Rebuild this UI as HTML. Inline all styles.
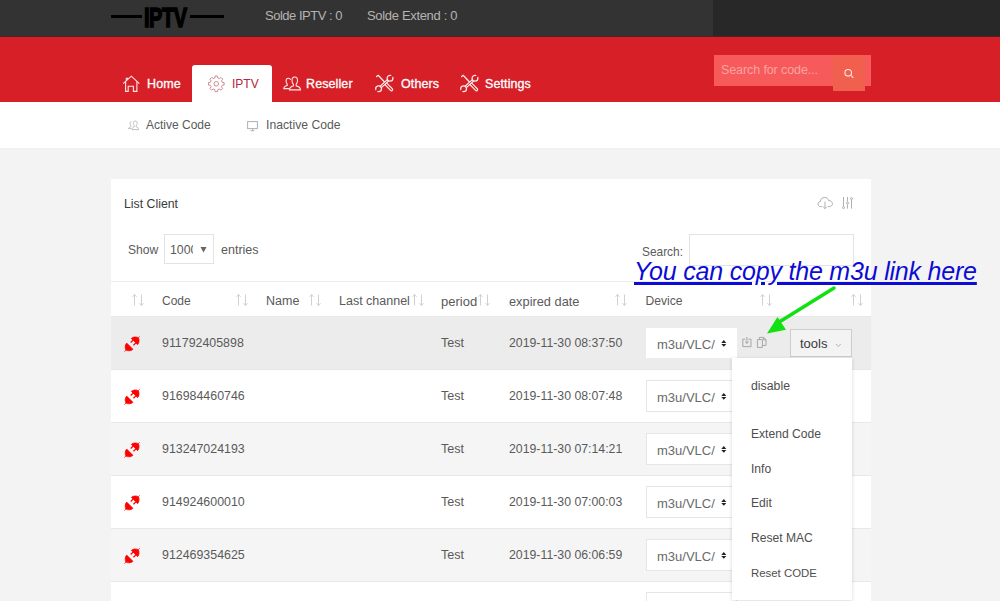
<!DOCTYPE html>
<html><head><meta charset="utf-8">
<style>
*{box-sizing:border-box;margin:0;padding:0}
html,body{width:1000px;height:601px;overflow:hidden;background:#f3f3f3;font-family:"Liberation Sans",sans-serif}
.a{position:absolute;white-space:nowrap;line-height:15px}
svg{position:absolute;overflow:visible}
</style></head><body>
<div class="a" style="left:0;top:0;width:713px;height:37px;background:#333"></div>
<div class="a" style="left:713px;top:0;width:287px;height:37px;background:#282828"></div>
<div class="a" style="left:111px;top:15px;width:31px;height:2.5px;background:#000"></div>
<div class="a" style="left:190px;top:15px;width:34px;height:2.5px;background:#000"></div>
<div class="a" style="left:144px;top:1.5px;font-size:28.5px;line-height:30px;font-weight:bold;color:#000;-webkit-text-stroke:1.6px #000;letter-spacing:-0.6px;transform:scaleX(0.70);transform-origin:0 0">IPTV</div>
<div class="a" style="left:265px;top:7.5px;font-size:13px;color:#b4b4b4;letter-spacing:-0.48px">Solde IPTV : 0</div>

<div class="a" style="left:367px;top:7.5px;font-size:13px;color:#b4b4b4;letter-spacing:-0.33px">Solde Extend : 0</div>

<div class="a" style="left:0;top:37px;width:1000px;height:65px;background:#d71f27"></div>
<div class="a" style="left:0;top:36px;width:1000px;height:1px;background:#4a2326"></div>
<div class="a" style="left:192px;top:65px;width:80px;height:37px;background:#fff;border-radius:3px 3px 0 0"></div>
<div class="a" style="left:147px;top:77px;font-size:12.5px;color:#fff;-webkit-text-stroke:0.3px #fff;letter-spacing:0.1px">Home</div>

<div class="a" style="left:232px;top:77px;font-size:12px;color:#b02a3a;">IPTV</div>

<div class="a" style="left:306px;top:77px;font-size:12.5px;color:#fff;-webkit-text-stroke:0.3px #fff;letter-spacing:0.1px">Reseller</div>

<div class="a" style="left:401px;top:77px;font-size:12.5px;color:#fff;-webkit-text-stroke:0.3px #fff;letter-spacing:0.1px">Others</div>

<div class="a" style="left:485px;top:77px;font-size:12.5px;color:#fff;-webkit-text-stroke:0.3px #fff;letter-spacing:0.1px">Settings</div>

<svg style="left:122px;top:75px" width="19" height="17" viewBox="0 0 19 17"><g fill="none" stroke="#fde8e8" stroke-width="1.1"><path d="M1.2 8.6L9.3 1.2L17.3 8.6"/><path d="M3.6 6.6V16.4H6.2V11.2H11.4V16.4H14.9V6.6"/><path d="M4.3 5.8V3.2H5.6V4.6"/></g></svg>
<svg style="left:200px;top:70px" width="30" height="30" viewBox="0 0 30 30"><g fill="none" stroke="#c98088" stroke-width="0.9" stroke-linejoin="round"><path d="M22.10 12.25 L24.10 12.56 L24.10 15.04 L22.10 15.35 L21.50 16.80 L22.69 18.44 L20.94 20.19 L19.30 19.00 L17.85 19.60 L17.54 21.60 L15.06 21.60 L14.75 19.60 L13.30 19.00 L11.66 20.19 L9.91 18.44 L11.10 16.80 L10.50 15.35 L8.50 15.04 L8.50 12.56 L10.50 12.25 L11.10 10.80 L9.91 9.16 L11.66 7.41 L13.30 8.60 L14.75 8.00 L15.06 6.00 L17.54 6.00 L17.85 8.00 L19.30 8.60 L20.94 7.41 L22.69 9.16 L21.50 10.80Z"/><circle cx="16.3" cy="13.8" r="2.3"/></g></svg>
<svg style="left:282px;top:75px" width="21" height="17" viewBox="0 0 21 17"><g fill="none" stroke="#fde8e8" stroke-width="1.1"><path d="M12.7 2C10.9 2 10 3.4 10 5.4C10 7.2 10.6 8.4 11.4 9.2V10.9C9.4 11.4 7.6 12.4 7.5 14.9H18.5C18.4 12.4 16.6 11.4 14.2 10.9V9.2C15 8.4 15.5 7.2 15.5 5.4C15.5 3.4 14.6 2 12.7 2Z"/><path d="M6.3 3.3C4.9 3.3 4.1 4.4 4.1 6C4.1 7.5 4.6 8.4 5.2 9.1V10.5C3.6 10.9 1.8 11.6 1.8 13.6H7.2M8.5 5C8.4 4 7.6 3.3 6.3 3.3"/></g></svg>
<svg style="left:374px;top:74px" width="20" height="19" viewBox="0 0 20 19"><g fill="none" stroke-linecap="round"><path d="M2.6 2.6L4.2 1.4L5.6 2.8L11.2 8.8" stroke="#fde8e8" stroke-width="1.3"/><line x1="12.4" y1="10.4" x2="17.4" y2="15.6" stroke="#fde8e8" stroke-width="3.6"/><line x1="12.4" y1="10.4" x2="17.4" y2="15.6" stroke="#d71f27" stroke-width="1.2"/><line x1="15.6" y1="4.8" x2="5.4" y2="14.2" stroke="#fde8e8" stroke-width="3"/><line x1="15.6" y1="4.8" x2="5.4" y2="14.2" stroke="#d71f27" stroke-width="0.9"/><circle cx="16" cy="4.2" r="2.9" stroke="#fde8e8" stroke-width="1.3" fill="#d71f27"/><circle cx="4.6" cy="14.8" r="2.9" stroke="#fde8e8" stroke-width="1.3" fill="#d71f27"/><line x1="16.2" y1="4" x2="19.2" y2="1" stroke="#d71f27" stroke-width="1.8"/><line x1="4.4" y1="15" x2="1.4" y2="18" stroke="#d71f27" stroke-width="1.8"/></g></svg>
<svg style="left:459px;top:74px" width="20" height="19" viewBox="0 0 20 19"><g fill="none" stroke-linecap="round"><path d="M2.6 2.6L4.2 1.4L5.6 2.8L11.2 8.8" stroke="#fde8e8" stroke-width="1.3"/><line x1="12.4" y1="10.4" x2="17.4" y2="15.6" stroke="#fde8e8" stroke-width="3.6"/><line x1="12.4" y1="10.4" x2="17.4" y2="15.6" stroke="#d71f27" stroke-width="1.2"/><line x1="15.6" y1="4.8" x2="5.4" y2="14.2" stroke="#fde8e8" stroke-width="3"/><line x1="15.6" y1="4.8" x2="5.4" y2="14.2" stroke="#d71f27" stroke-width="0.9"/><circle cx="16" cy="4.2" r="2.9" stroke="#fde8e8" stroke-width="1.3" fill="#d71f27"/><circle cx="4.6" cy="14.8" r="2.9" stroke="#fde8e8" stroke-width="1.3" fill="#d71f27"/><line x1="16.2" y1="4" x2="19.2" y2="1" stroke="#d71f27" stroke-width="1.8"/><line x1="4.4" y1="15" x2="1.4" y2="18" stroke="#d71f27" stroke-width="1.8"/></g></svg>
<div class="a" style="left:714px;top:55px;width:157px;height:31px;background:#f65a5b"></div>
<div class="a" style="left:833px;top:55px;width:32px;height:36px;background:#f1604f"></div>
<div class="a" style="left:721px;top:63px;font-size:12.5px;color:#fba3a3;letter-spacing:-0.1px">Search for code...</div>

<svg style="left:842px;top:66px" width="14" height="14" viewBox="0 0 14 14"><g fill="none" stroke="#fde8e0" stroke-width="1.1"><circle cx="6.2" cy="6.8" r="3.3"/><path d="M8.6 9.2L11.4 11.8"/></g></svg>
<div class="a" style="left:0;top:102px;width:1000px;height:47px;background:#fff;border-bottom:1px solid #f0f0f0"></div>
<div class="a" style="left:146px;top:118px;font-size:12px;color:#5a5a5a;">Active Code</div>

<div class="a" style="left:266px;top:118px;font-size:12.2px;color:#5a5a5a;">Inactive Code</div>

<svg style="left:127px;top:120px" width="13" height="11" viewBox="0 0 13 11"><g fill="none" stroke="#b8b8b8" stroke-width="0.9"><path d="M8 1C6.6 1 6.3 2.2 6.4 3.3C6.5 4.6 7 5.2 7.2 5.6V6.8C6.2 7.1 5.2 7.6 5 9.6H11.6C11.4 7.6 10.4 7.1 9.2 6.8V5.6C9.6 5.2 10 4.6 10.1 3.3C10.2 2.2 9.8 1 8 1Z"/><path d="M4.6 1.6C3.4 1.6 3 2.6 3.1 3.6C3.2 4.8 3.6 5.2 3.8 5.6V6.8C2.8 7.1 1.6 7.6 1.2 8.6H4.4"/></g></svg>
<svg style="left:246px;top:120px" width="13" height="12" viewBox="0 0 13 12"><g fill="none" stroke="#b0b0b0" stroke-width="1"><rect x="1.6" y="1.6" width="9.8" height="7"/><path d="M6.5 8.6V10.4M4.6 10.7H8.4"/></g></svg>
<div class="a" style="left:111px;top:179px;width:760px;height:430px;background:#fff"></div>
<div class="a" style="left:124px;top:197px;font-size:12.3px;color:#3a3a3a;">List Client</div>

<svg style="left:816.5px;top:193.5px" width="17" height="16" viewBox="0 0 17 16"><g fill="none" stroke="#a8a8a8" stroke-width="0.9"><path d="M5.2 12.6H3.6C2 12.6 1 11.4 1 10C1 8.6 2 7.6 3.4 7.6C3.4 5.2 5 3.4 7.6 3.4C9.8 3.4 11.2 4.8 11.6 6.6C13.6 6.4 15.4 7.8 15.4 9.8C15.4 11.4 14.2 12.6 12.6 12.6H10.8"/><path d="M8 7.6V14.6M6.2 12.8L8 14.6L9.8 12.8"/></g></svg>
<svg style="left:841px;top:196px" width="14" height="14" viewBox="0 0 14 14"><g fill="none" stroke="#a8a8a8" stroke-width="0.9"><path d="M2.5 1V10.6M6.5 1V5.6M6.5 8.4V12.6M10.5 3.6V12.6"/><circle cx="2.5" cy="11.6" r="1"/><circle cx="6.5" cy="7" r="1"/><circle cx="10.5" cy="2.6" r="1"/></g></svg>
<div class="a" style="left:128px;top:243px;font-size:12.1px;color:#5a5a5a;">Show</div>

<div class="a" style="left:164px;top:234px;width:50px;height:30px;border:1px solid #e3e3e3;background:#fff"></div>
<div class="a" style="left:170px;top:243px;font-size:12.3px;color:#5a5a5a;width:23px;overflow:hidden">1000</div>

<svg style="left:200px;top:246px" width="8" height="8" viewBox="0 0 8 8"><path d="M0.5 1H6.5L3.5 6.5Z" fill="#666"/></svg>
<div class="a" style="left:221px;top:243px;font-size:12.5px;color:#5a5a5a;">entries</div>

<div class="a" style="left:642px;top:244.5px;font-size:11.9px;color:#5a5a5a;">Search:</div>

<div class="a" style="left:689px;top:234px;width:165px;height:32px;border:1px solid #e3e3e3;background:#fff"></div>
<div class="a" style="left:111px;top:281px;width:760px;height:1px;background:#ececec"></div>
<div class="a" style="left:162px;top:294px;font-size:12px;color:#5a5a5a;">Code</div>

<div class="a" style="left:266px;top:294px;font-size:12.5px;color:#5a5a5a;">Name</div>

<div class="a" style="left:339px;top:294px;font-size:12.5px;color:#5a5a5a;">Last channel</div>

<div class="a" style="left:441px;top:293.5px;font-size:13px;color:#5a5a5a;">period</div>

<div class="a" style="left:509px;top:293.5px;font-size:12.8px;color:#5a5a5a;">expired date</div>

<div class="a" style="left:645.5px;top:294px;font-size:12.1px;color:#5a5a5a;">Device</div>

<svg style="left:132px;top:294px" width="12" height="12" viewBox="0 0 12 12"><g stroke="#d0d0d0" stroke-width="1" fill="none"><path d="M2.5 0.5V11.5M0.5 2.8L2.5 0.6L4.5 2.8"/><path d="M9.5 0.5V11.5M7.5 9.2L9.5 11.4L11.5 9.2"/></g></svg>

<svg style="left:236px;top:294px" width="12" height="12" viewBox="0 0 12 12"><g stroke="#d0d0d0" stroke-width="1" fill="none"><path d="M2.5 0.5V11.5M0.5 2.8L2.5 0.6L4.5 2.8"/><path d="M9.5 0.5V11.5M7.5 9.2L9.5 11.4L11.5 9.2"/></g></svg>

<svg style="left:309px;top:294px" width="12" height="12" viewBox="0 0 12 12"><g stroke="#d0d0d0" stroke-width="1" fill="none"><path d="M2.5 0.5V11.5M0.5 2.8L2.5 0.6L4.5 2.8"/><path d="M9.5 0.5V11.5M7.5 9.2L9.5 11.4L11.5 9.2"/></g></svg>

<svg style="left:412px;top:294px" width="12" height="12" viewBox="0 0 12 12"><g stroke="#d0d0d0" stroke-width="1" fill="none"><path d="M2.5 0.5V11.5M0.5 2.8L2.5 0.6L4.5 2.8"/><path d="M9.5 0.5V11.5M7.5 9.2L9.5 11.4L11.5 9.2"/></g></svg>

<svg style="left:478px;top:294px" width="12" height="12" viewBox="0 0 12 12"><g stroke="#d0d0d0" stroke-width="1" fill="none"><path d="M2.5 0.5V11.5M0.5 2.8L2.5 0.6L4.5 2.8"/><path d="M9.5 0.5V11.5M7.5 9.2L9.5 11.4L11.5 9.2"/></g></svg>

<svg style="left:615px;top:294px" width="12" height="12" viewBox="0 0 12 12"><g stroke="#d0d0d0" stroke-width="1" fill="none"><path d="M2.5 0.5V11.5M0.5 2.8L2.5 0.6L4.5 2.8"/><path d="M9.5 0.5V11.5M7.5 9.2L9.5 11.4L11.5 9.2"/></g></svg>

<svg style="left:760px;top:294px" width="12" height="12" viewBox="0 0 12 12"><g stroke="#d0d0d0" stroke-width="1" fill="none"><path d="M2.5 0.5V11.5M0.5 2.8L2.5 0.6L4.5 2.8"/><path d="M9.5 0.5V11.5M7.5 9.2L9.5 11.4L11.5 9.2"/></g></svg>

<svg style="left:851px;top:294px" width="12" height="12" viewBox="0 0 12 12"><g stroke="#d0d0d0" stroke-width="1" fill="none"><path d="M2.5 0.5V11.5M0.5 2.8L2.5 0.6L4.5 2.8"/><path d="M9.5 0.5V11.5M7.5 9.2L9.5 11.4L11.5 9.2"/></g></svg>

<div class="a" style="left:111px;top:316px;width:760px;height:53px;background:#ececec;border-top:1px solid #e8e8e8"></div>
<div class="a" style="left:646px;top:328px;width:91px;height:30px;background:#fff"></div>
<svg style="left:123px;top:335px" width="18" height="18" viewBox="0 0 18 18"><g transform="rotate(45 9 9)" fill="#f00" stroke="#f00" stroke-width="0.7">
<path d="M4.6 5.5 C4.6 3.2 6.6 0.8 9 0 C11.4 0.8 13.4 3.2 13.4 5.5 Z"/><path d="M9 0.2V-1.8"/><rect x="6.4" y="5.5" width="1.3" height="3.4" stroke="none"/><rect x="10.3" y="5.5" width="1.3" height="3.4" stroke="none"/>
<path d="M4.6 12.1 C4.6 14.6 6.6 16.8 9 17.6 C11.4 16.8 13.4 14.6 13.4 12.1 Z"/><path d="M9 17.4V19.8"/></g></svg>

<div class="a" style="left:162px;top:336px;font-size:12.4px;color:#5a5a5a;">911792405898</div>

<div class="a" style="left:441px;top:336px;font-size:12.6px;color:#5a5a5a;">Test</div>

<div class="a" style="left:509px;top:336px;font-size:12.3px;color:#5a5a5a;">2019-11-30 08:37:50</div>

<div class="a" style="left:657px;top:336.5px;font-size:13px;color:#6a6a6a;">m3u/VLC/</div>

<svg style="left:721px;top:340px" width="6" height="7" viewBox="0 0 6 7"><path d="M0.3 2.9H5.3L2.8 0Z M0.3 3.9H5.3L2.8 6.8Z" fill="#222"/></svg>
<div class="a" style="left:111px;top:369px;width:760px;height:53px;background:#fff;border-top:1px solid #e8e8e8"></div>
<div class="a" style="left:646px;top:380px;width:91px;height:32px;background:#fff;border:1px solid #e6e6e6"></div>
<svg style="left:123px;top:388px" width="18" height="18" viewBox="0 0 18 18"><g transform="rotate(45 9 9)" fill="#f00" stroke="#f00" stroke-width="0.7">
<path d="M4.6 5.5 C4.6 3.2 6.6 0.8 9 0 C11.4 0.8 13.4 3.2 13.4 5.5 Z"/><path d="M9 0.2V-1.8"/><rect x="6.4" y="5.5" width="1.3" height="3.4" stroke="none"/><rect x="10.3" y="5.5" width="1.3" height="3.4" stroke="none"/>
<path d="M4.6 12.1 C4.6 14.6 6.6 16.8 9 17.6 C11.4 16.8 13.4 14.6 13.4 12.1 Z"/><path d="M9 17.4V19.8"/></g></svg>

<div class="a" style="left:162px;top:389px;font-size:12.4px;color:#5a5a5a;">916984460746</div>

<div class="a" style="left:441px;top:389px;font-size:12.6px;color:#5a5a5a;">Test</div>

<div class="a" style="left:509px;top:389px;font-size:12.3px;color:#5a5a5a;">2019-11-30 08:07:48</div>

<div class="a" style="left:657px;top:389.5px;font-size:13px;color:#6a6a6a;">m3u/VLC/</div>

<svg style="left:721px;top:393px" width="6" height="7" viewBox="0 0 6 7"><path d="M0.3 2.9H5.3L2.8 0Z M0.3 3.9H5.3L2.8 6.8Z" fill="#222"/></svg>
<div class="a" style="left:111px;top:422px;width:760px;height:53px;background:#f5f5f5;border-top:1px solid #e8e8e8"></div>
<div class="a" style="left:646px;top:433px;width:91px;height:32px;background:#fff;border:1px solid #e6e6e6"></div>
<svg style="left:123px;top:441px" width="18" height="18" viewBox="0 0 18 18"><g transform="rotate(45 9 9)" fill="#f00" stroke="#f00" stroke-width="0.7">
<path d="M4.6 5.5 C4.6 3.2 6.6 0.8 9 0 C11.4 0.8 13.4 3.2 13.4 5.5 Z"/><path d="M9 0.2V-1.8"/><rect x="6.4" y="5.5" width="1.3" height="3.4" stroke="none"/><rect x="10.3" y="5.5" width="1.3" height="3.4" stroke="none"/>
<path d="M4.6 12.1 C4.6 14.6 6.6 16.8 9 17.6 C11.4 16.8 13.4 14.6 13.4 12.1 Z"/><path d="M9 17.4V19.8"/></g></svg>

<div class="a" style="left:162px;top:442px;font-size:12.4px;color:#5a5a5a;">913247024193</div>

<div class="a" style="left:441px;top:442px;font-size:12.6px;color:#5a5a5a;">Test</div>

<div class="a" style="left:509px;top:442px;font-size:12.3px;color:#5a5a5a;">2019-11-30 07:14:21</div>

<div class="a" style="left:657px;top:442.5px;font-size:13px;color:#6a6a6a;">m3u/VLC/</div>

<svg style="left:721px;top:446px" width="6" height="7" viewBox="0 0 6 7"><path d="M0.3 2.9H5.3L2.8 0Z M0.3 3.9H5.3L2.8 6.8Z" fill="#222"/></svg>
<div class="a" style="left:111px;top:475px;width:760px;height:53px;background:#fff;border-top:1px solid #e8e8e8"></div>
<div class="a" style="left:646px;top:486px;width:91px;height:32px;background:#fff;border:1px solid #e6e6e6"></div>
<svg style="left:123px;top:494px" width="18" height="18" viewBox="0 0 18 18"><g transform="rotate(45 9 9)" fill="#f00" stroke="#f00" stroke-width="0.7">
<path d="M4.6 5.5 C4.6 3.2 6.6 0.8 9 0 C11.4 0.8 13.4 3.2 13.4 5.5 Z"/><path d="M9 0.2V-1.8"/><rect x="6.4" y="5.5" width="1.3" height="3.4" stroke="none"/><rect x="10.3" y="5.5" width="1.3" height="3.4" stroke="none"/>
<path d="M4.6 12.1 C4.6 14.6 6.6 16.8 9 17.6 C11.4 16.8 13.4 14.6 13.4 12.1 Z"/><path d="M9 17.4V19.8"/></g></svg>

<div class="a" style="left:162px;top:495px;font-size:12.4px;color:#5a5a5a;">914924600010</div>

<div class="a" style="left:441px;top:495px;font-size:12.6px;color:#5a5a5a;">Test</div>

<div class="a" style="left:509px;top:495px;font-size:12.3px;color:#5a5a5a;">2019-11-30 07:00:03</div>

<div class="a" style="left:657px;top:495.5px;font-size:13px;color:#6a6a6a;">m3u/VLC/</div>

<svg style="left:721px;top:499px" width="6" height="7" viewBox="0 0 6 7"><path d="M0.3 2.9H5.3L2.8 0Z M0.3 3.9H5.3L2.8 6.8Z" fill="#222"/></svg>
<div class="a" style="left:111px;top:528px;width:760px;height:53px;background:#f5f5f5;border-top:1px solid #e8e8e8"></div>
<div class="a" style="left:646px;top:539px;width:91px;height:32px;background:#fff;border:1px solid #e6e6e6"></div>
<svg style="left:123px;top:547px" width="18" height="18" viewBox="0 0 18 18"><g transform="rotate(45 9 9)" fill="#f00" stroke="#f00" stroke-width="0.7">
<path d="M4.6 5.5 C4.6 3.2 6.6 0.8 9 0 C11.4 0.8 13.4 3.2 13.4 5.5 Z"/><path d="M9 0.2V-1.8"/><rect x="6.4" y="5.5" width="1.3" height="3.4" stroke="none"/><rect x="10.3" y="5.5" width="1.3" height="3.4" stroke="none"/>
<path d="M4.6 12.1 C4.6 14.6 6.6 16.8 9 17.6 C11.4 16.8 13.4 14.6 13.4 12.1 Z"/><path d="M9 17.4V19.8"/></g></svg>

<div class="a" style="left:162px;top:548px;font-size:12.4px;color:#5a5a5a;">912469354625</div>

<div class="a" style="left:441px;top:548px;font-size:12.6px;color:#5a5a5a;">Test</div>

<div class="a" style="left:509px;top:548px;font-size:12.3px;color:#5a5a5a;">2019-11-30 06:06:59</div>

<div class="a" style="left:657px;top:548.5px;font-size:13px;color:#6a6a6a;">m3u/VLC/</div>

<svg style="left:721px;top:552px" width="6" height="7" viewBox="0 0 6 7"><path d="M0.3 2.9H5.3L2.8 0Z M0.3 3.9H5.3L2.8 6.8Z" fill="#222"/></svg>
<div class="a" style="left:111px;top:581px;width:760px;height:53px;background:#fff;border-top:1px solid #e8e8e8"></div>
<div class="a" style="left:646px;top:592px;width:91px;height:32px;background:#fff;border:1px solid #e6e6e6"></div>
<svg style="left:741px;top:336px" width="28" height="13" viewBox="0 0 28 13"><g fill="none" stroke="#a6a6a6" stroke-width="1"><path d="M4.4 3.2H1.8V10.6H10V3.2H7.4"/><path d="M5.9 1V7.4M4 5.6L5.9 7.4L7.8 5.6"/><path d="M16.4 3.6H21.4V11.4H16.4Z"/><path d="M18.4 3.6V1.4H22.6L25 3.6V9.4H21.4M22.4 1.4V3.8H25"/></g></svg>
<div class="a" style="left:790px;top:329px;width:62px;height:28px;background:#f3f3f3;border:1px solid #cdcdcd"></div>
<div class="a" style="left:800px;top:336px;font-size:13px;color:#3a3a3a;">tools</div>

<svg style="left:834.5px;top:343px" width="7" height="5" viewBox="0 0 7 5"><path d="M0.8 0.9L3.3 3.5L5.8 0.9" fill="none" stroke="#aaa" stroke-width="0.9"/></svg>
<div class="a" style="left:732px;top:358px;width:120px;height:242px;background:#fff;box-shadow:0 1px 4px rgba(0,0,0,.16)"></div>
<div class="a" style="left:751px;top:378.5px;font-size:12.3px;color:#4e4e4e;">disable</div>

<div class="a" style="left:751px;top:427px;font-size:12.1px;color:#4e4e4e;">Extend Code</div>

<div class="a" style="left:751px;top:461.5px;font-size:12.1px;color:#4e4e4e;">Info</div>

<div class="a" style="left:751px;top:496px;font-size:12.1px;color:#4e4e4e;">Edit</div>

<div class="a" style="left:751px;top:531px;font-size:12.1px;color:#4e4e4e;">Reset MAC</div>

<div class="a" style="left:751px;top:566px;font-size:11.4px;color:#4e4e4e;">Reset CODE</div>

<div class="a" style="left:634px;top:256px;font-size:25px;line-height:30px;font-style:italic;color:#0c0cd4;text-decoration:underline;text-decoration-thickness:2.6px;text-underline-offset:1.8px;letter-spacing:-0.2px">You can copy the m3u link here</div>
<svg style="left:0;top:0" width="1000" height="601"><line x1="834" y1="288" x2="776" y2="324" stroke="#11e011" stroke-width="3.5" stroke-linecap="round"/><polygon points="767,333.5 777.5,317 786,329.7" fill="#11e011"/></svg>
</body></html>
